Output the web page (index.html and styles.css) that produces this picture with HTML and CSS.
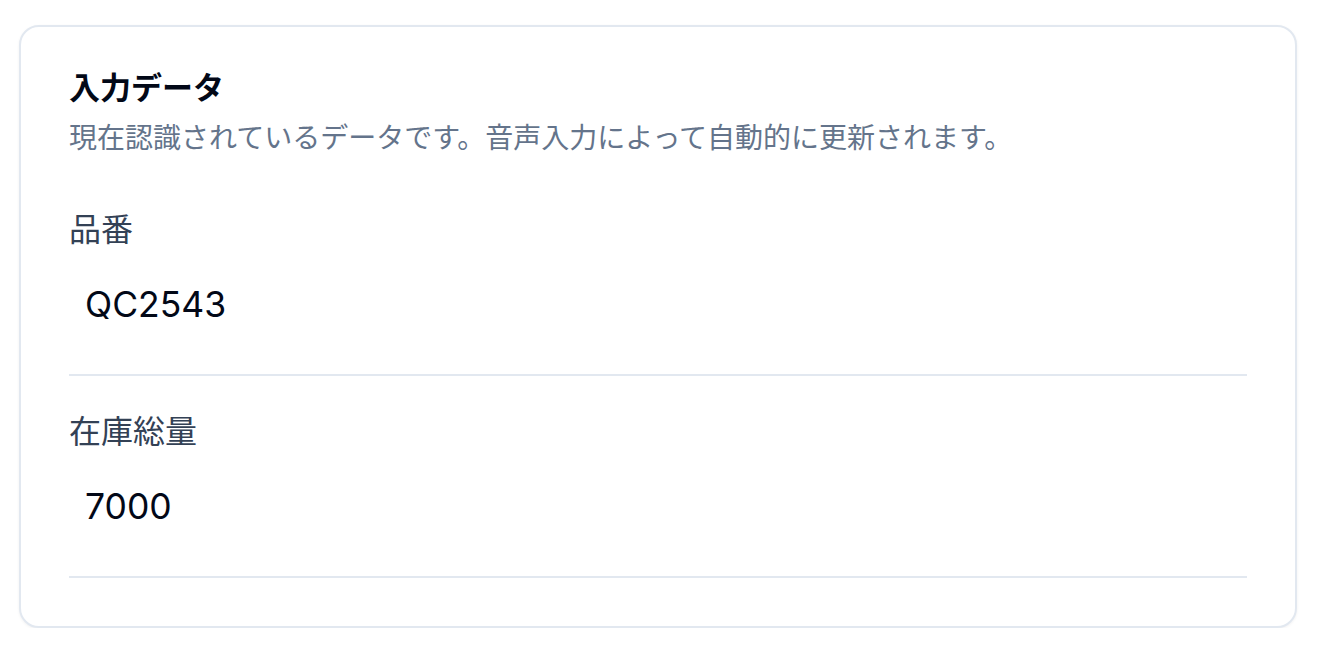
FILE: index.html
```html
<!DOCTYPE html>
<html lang="ja">
<head>
<meta charset="utf-8">
<link rel="stylesheet" href="styles.css">
</head>
<body>
  <section class="card">
    <header class="card-header">
      <h2 class="card-title">入力データ</h2>
      <p class="card-desc">現在認識されているデータです。音声入力によって自動的に更新されます。</p>
    </header>
    <div class="field">
      <div class="field-label">品番</div>
      <div class="field-value">QC2543</div>
    </div>
    <div class="field">
      <div class="field-label">在庫総量</div>
      <div class="field-value">7000</div>
    </div>
  </section>
</body>
</html>
```
FILE: styles.css
```css
html, body {
  margin: 0;
  background: #ffffff;
}
body {
  padding: 25px 25px 0 19px;
  font-family: "Noto Sans CJK JP", "Noto Sans", sans-serif;
}
.card {
  border: 2px solid #e2e8f0;
  border-radius: 20px;
  padding: 41px 48px 48px 48px;
  box-shadow: 0 1px 3px rgba(15, 23, 42, 0.06);
  background: #fff;
}
.card-header {
  margin-bottom: 20px;
}
.card-title {
  margin: 0;
  font-size: 31px;
  line-height: 36px;
  font-weight: 700;
  color: #020817;
}
.card-desc {
  margin: 14px 0 0;
  font-size: 28px;
  line-height: 36px;
  color: #64748b;
}
.field {
  padding-top: 33px;
  padding-bottom: 45px;
  border-bottom: 2px solid #e2e8f0;
}
.field-label {
  font-size: 32px;
  line-height: 40px;
  color: #334155;
}
.field-value {
  margin-top: 34px;
  padding-left: 16px;
  font-family: Inter, "Noto Sans", sans-serif;
  font-size: 35.5px;
  line-height: 48px;
  color: #020817;
}
```
